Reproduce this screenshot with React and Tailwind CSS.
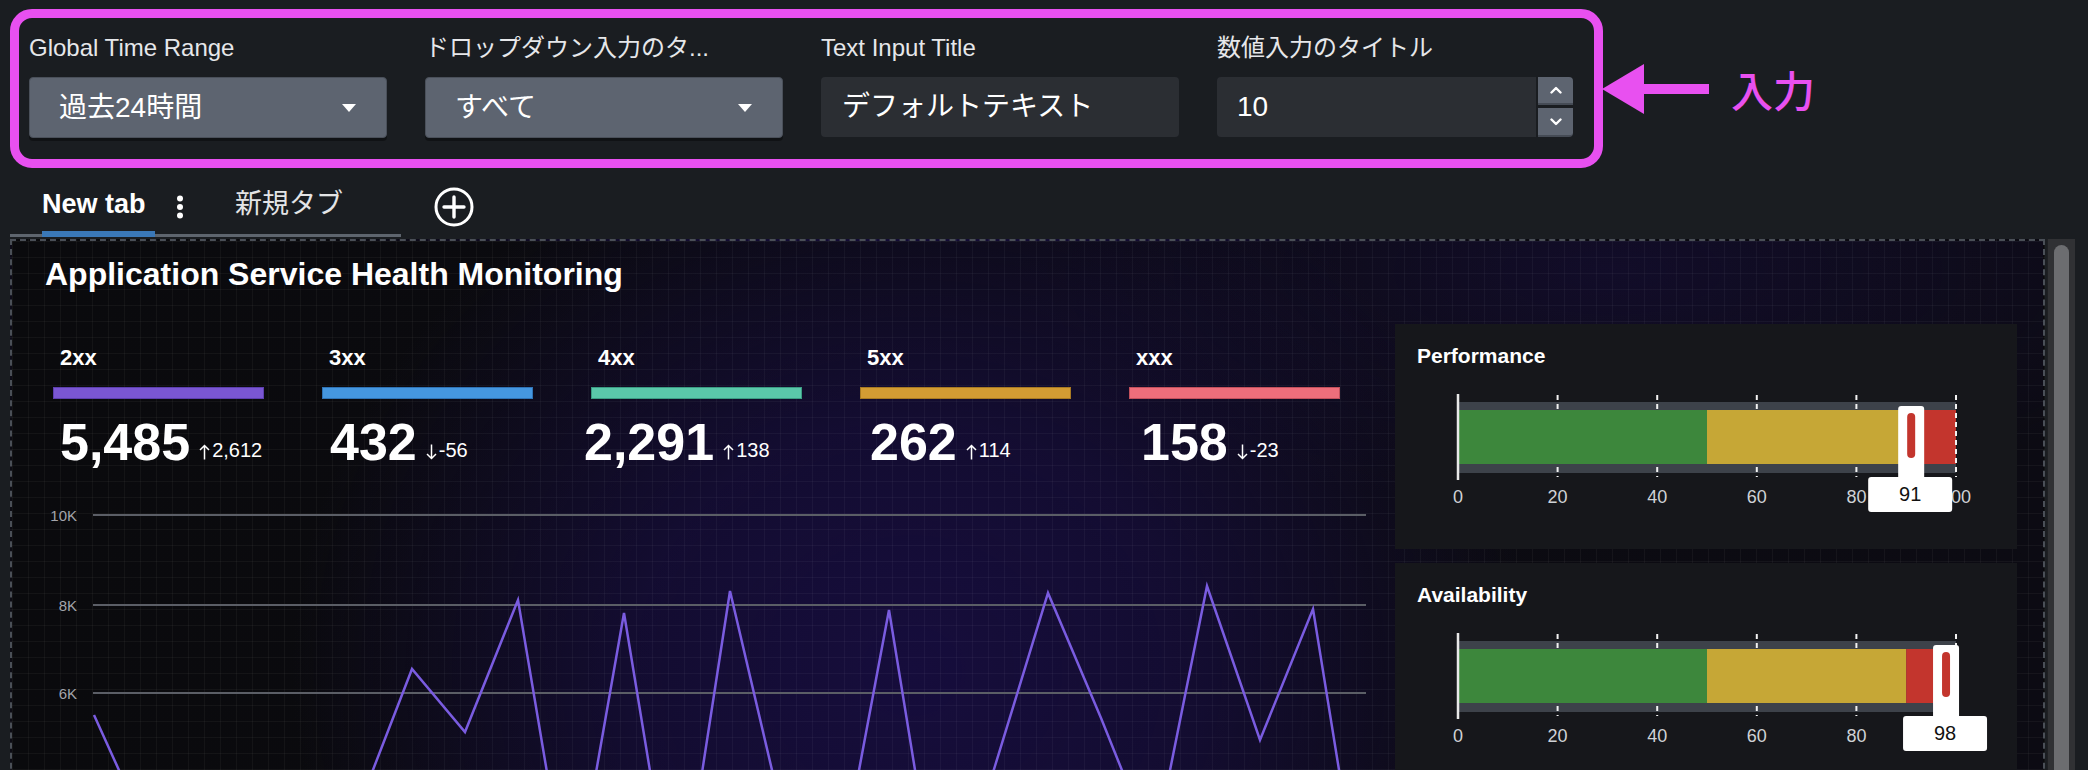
import React from 'react';

const kpis = [
  { label: '2xx', bar: 'bg-[#7a56d3] border-[#5d3fae]', value: '5,485', up: true, delta: '2,612', off: 'ml-[7px]' },
  { label: '3xx', bar: 'bg-[#4597e0] border-[#2f73b5]', value: '432', up: false, delta: '-56', off: 'ml-[8px]' },
  { label: '4xx', bar: 'bg-[#5ac8aa] border-[#3b9c83]', value: '2,291', up: true, delta: '138', off: '-ml-[7px]' },
  { label: '5xx', bar: 'bg-[#d39c33] border-[#a87a22]', value: '262', up: true, delta: '114', off: 'ml-[10px]' },
  { label: 'xxx', bar: 'bg-[#ee6e7b] border-[#c2505c]', value: '158', up: false, delta: '-23', off: 'ml-[12px]' },
];

// chart values, already in screen px (y of each point)
const series = [715, 832, 900, 880, 920, 806, 669, 732, 600, 915, 613, 935, 591, 817, 893, 610, 936, 766, 593, 718, 850, 586, 740, 609, 937];

function Caret() {
  return (
    <svg width="14" height="8" viewBox="0 0 14 8">
      <path d="M0 0 L14 0 L7 8 Z" fill="#ffffff" />
    </svg>
  );
}

function Field({ label, children }) {
  return (
    <div className="w-[358px] flex flex-col">
      <div className="text-[24px] leading-[30px] text-[#e6e7ea] mb-[14px] whitespace-nowrap">{label}</div>
      {children}
    </div>
  );
}

function Dropdown({ value }) {
  return (
    <button className="w-[358px] h-[61px] rounded-[4px] bg-[#5d6470] border border-[#4a505a] shadow-[0_3px_0_rgba(0,0,0,0.35)] flex items-center justify-between pl-[29px] pr-[30px] text-[28px] text-white">
      <span>{value}</span>
      <Caret />
    </button>
  );
}

function Chevron({ up }) {
  return (
    <svg width="12" height="8" viewBox="0 0 12 8">
      <path d={up ? 'M1.5 6.5 L6 2 L10.5 6.5' : 'M1.5 1.5 L6 6 L10.5 1.5'} stroke="#ffffff" strokeWidth="2.4" fill="none" strokeLinecap="round" strokeLinejoin="round" />
    </svg>
  );
}

function TrendArrow({ up }) {
  return (
    <svg width="11" height="16" viewBox="0 0 11 16" className="mr-[2px]">
      {up ? (
        <path d="M5.5 15.5 V1.5 M1 6 L5.5 1.5 L10 6" stroke="#ffffff" strokeWidth="1.5" fill="none" />
      ) : (
        <path d="M5.5 0.5 V14.5 M1 10 L5.5 14.5 L10 10" stroke="#ffffff" strokeWidth="1.5" fill="none" />
      )}
    </svg>
  );
}

function Gauge({ title, value }) {
  const x0 = 63;
  const w = 498;
  const px = (v) => x0 + (w * v) / 100;
  const cx = px(value);
  const ticks = [20, 40, 60, 80, 100];
  return (
    <div className="w-[622px] h-[225px] bg-[#16171b] flex flex-col shrink-0">
      <div className="pl-[22px] pt-[18px] text-[21px] leading-[28px] font-bold text-white">{title}</div>
      <svg width="622" height="169" viewBox="0 0 622 169" className="mt-[10px] block">
        <rect x={x0} y="22" width={w} height="71" fill="#3d424a" />
        {ticks.map((t) => (
          <line key={t} x1={px(t)} x2={px(t)} y1="15" y2="97" stroke="#f2f2f2" strokeWidth="2" strokeDasharray="5 4" />
        ))}
        <rect x={x0} y="30" width={px(50) - x0} height="54" fill="#3d873c" />
        <rect x={px(50)} y="30" width={px(90) - px(50)} height="54" fill="#c6a736" />
        <rect x={px(90)} y="30" width={px(100) - px(90)} height="54" fill="#c3352d" />
        <line x1={px(100)} x2={px(100)} y1="15" y2="97" stroke="#f2f2f2" strokeWidth="2" strokeDasharray="5 4" />
        <line x1={x0} x2={x0} y1="14" y2="100" stroke="#e8e8e8" strokeWidth="2.5" />
        {[0, 20, 40, 60, 80, 100].map((t) => (
          <text key={t} x={px(t)} y="118" textAnchor="middle" dominantBaseline="middle" fontSize="18" fill="#cfd2d6" fontFamily="Liberation Sans, sans-serif">
            {t}
          </text>
        ))}
        <rect x={cx - 13} y="26" width="26" height="76" rx="3" fill="#ffffff" />
        <rect x={cx - 43} y="97" width="84" height="35" rx="3" fill="#ffffff" />
        <rect x={cx - 4} y="33" width="8" height="45" rx="4" fill="#c3352d" />
        <text x={cx - 1} y="116" textAnchor="middle" dominantBaseline="middle" fontSize="20" fill="#111111" fontFamily="Liberation Sans, sans-serif">
          {value}
        </text>
      </svg>
    </div>
  );
}

function Chart() {
  const points = series.map((y, i) => `${82 + 53 * i},${y - 490}`).join(' ');
  const grid = [
    { y: 25, label: '10K' },
    { y: 115, label: '8K' },
    { y: 203, label: '6K' },
  ];
  return (
    <svg width="1383" height="420" viewBox="0 0 1383 420" className="block mt-[20px]">
      {grid.map((g) => (
        <g key={g.label}>
          <line x1="81" x2="1354" y1={g.y} y2={g.y} stroke="#5b5e66" strokeWidth="2" />
          <text x="65" y={g.y + 2} textAnchor="end" dominantBaseline="middle" fontSize="15" fill="#a3a4ab" fontFamily="Liberation Sans, sans-serif">
            {g.label}
          </text>
        </g>
      ))}
      <polyline points={points} fill="none" stroke="#7a5ce0" strokeWidth="2.5" strokeLinejoin="miter" />
    </svg>
  );
}

export default function App() {
  return (
    <div className="w-[2088px] h-[770px] overflow-hidden bg-[#1a1d21] font-['Liberation_Sans','Noto_Sans_CJK_JP',sans-serif] text-white">
      {/* INPUTS */}
      <div className="h-[168px] flex items-start">
        <div className="ml-[10px] mt-[9px] w-[1593px] h-[159px] border-[9px] border-[#e850f0] rounded-[22px] flex gap-[38px] pl-[10px] pt-[15px]">
          <Field label="Global Time Range">
            <Dropdown value="過去24時間" />
          </Field>
          <Field label="ドロップダウン入力のタ...">
            <Dropdown value="すべて" />
          </Field>
          <Field label="Text Input Title">
            <div className="w-[358px] h-[60px] rounded-[4px] bg-[#2b2e33] flex items-center pl-[21px] text-[28px]">デフォルトテキスト</div>
          </Field>
          <Field label="数値入力のタイトル">
            <div className="w-[356px] h-[60px] flex gap-[2px]">
              <div className="flex-1 rounded-l-[4px] bg-[#2b2e33] flex items-center pl-[20px] text-[28px]">10</div>
              <div className="w-[35px] flex flex-col gap-[3px]">
                <div className="h-[28px] rounded-tr-[4px] bg-[#5d6470] border-b-2 border-[#454b55] flex items-center justify-center">
                  <Chevron up />
                </div>
                <div className="h-[29px] rounded-br-[4px] bg-[#5d6470] border-b-2 border-[#454b55] flex items-center justify-center">
                  <Chevron />
                </div>
              </div>
            </div>
          </Field>
        </div>

        {/* annotation */}
        <div className="flex items-center mt-[64px] h-[50px] -ml-[1px]">
          <svg width="107" height="50" viewBox="0 0 107 50">
            <path d="M0 25 L42 0 L42 50 Z" fill="#e850f0" />
            <rect x="41" y="20" width="66" height="10" fill="#e850f0" />
          </svg>
          <span className="ml-[22px] text-[42px] leading-[50px] font-medium text-[#e850f0] font-['Noto_Sans_CJK_JP',sans-serif]">入力</span>
        </div>
      </div>

      {/* TABS */}
      <div className="h-[71px] flex items-start pl-[10px]">
        <div className="w-[391px] h-[69px] border-b-[3px] border-[#5e656e] flex items-stretch pl-[32px]">
          <div className="w-[113px] -mb-[3px] border-b-[6px] border-[#3a78b8] flex items-center pt-[9px] text-[27px] font-bold text-white whitespace-nowrap">
            New tab
          </div>
          <div className="ml-[21px] flex items-center pt-[11px]">
            <svg width="8" height="24" viewBox="0 0 8 24">
              <circle cx="4" cy="3.5" r="3" fill="#ffffff" />
              <circle cx="4" cy="12" r="3" fill="#ffffff" />
              <circle cx="4" cy="20.5" r="3" fill="#ffffff" />
            </svg>
          </div>
          <div className="ml-[51px] flex items-center pt-[7px] text-[27px] text-[#e3e4e6] whitespace-nowrap">新規タブ</div>
        </div>
        <svg width="40" height="40" viewBox="0 0 40 40" className="ml-[33px] mt-[19px]">
          <circle cx="20" cy="20" r="18" fill="none" stroke="#ffffff" strokeWidth="3" />
          <path d="M20 10 V30 M10 20 H30" stroke="#ffffff" strokeWidth="3.4" strokeLinecap="round" />
        </svg>
      </div>

      {/* DASHBOARD CANVAS */}
      <div className="flex items-start">
        <div className="ml-[10px] w-[2035px] h-[560px] border-2 border-dashed border-[#4a4f57] [background-image:linear-gradient(rgba(255,255,255,0.04)_1px,transparent_1px),linear-gradient(90deg,rgba(255,255,255,0.04)_1px,transparent_1px),radial-gradient(ellipse_620px_560px_at_900px_430px,#160d3c_0%,rgba(22,13,60,0.75)_45%,transparent_100%),radial-gradient(ellipse_600px_240px_at_1600px_30px,rgba(24,14,64,0.5),transparent_100%),linear-gradient(90deg,#0a0a0d,#0c0b13)] [background-size:16px_16px,16px_16px,100%_100%,100%_100%,100%_100%] pt-[13px]">
          <div className="pl-[33px] text-[32px] leading-[40px] font-bold text-white whitespace-nowrap">Application Service Health Monitoring</div>

          <div className="mt-[30px] flex">
            {/* LEFT */}
            <div className="w-[1383px] shrink-0 flex flex-col pt-[21px]">
              <div className="flex gap-[58px] pl-[41px]">
                {kpis.map((k) => (
                  <div key={k.label} className="w-[211px] flex flex-col">
                    <div className="pl-[7px] text-[22px] leading-[26px] font-bold text-white">{k.label}</div>
                    <div className={`mt-[16px] h-[12px] border ${k.bar}`} />
                    <div className={`mt-[15px] flex items-baseline whitespace-nowrap ${k.off}`}>
                      <span className="text-[52px] leading-[56px] font-bold text-white">{k.value}</span>
                      <span className="ml-[9px] flex items-end text-[20px] leading-[20px] text-white">
                        <TrendArrow up={k.up} />
                        {k.delta}
                      </span>
                    </div>
                  </div>
                ))}
              </div>
              <Chart />
            </div>

            {/* RIGHT */}
            <div className="flex flex-col gap-[14px]">
              <Gauge title="Performance" value={91} />
              <Gauge title="Availability" value={98} />
            </div>
          </div>
        </div>

        {/* scrollbar */}
        <div className="ml-[2px] w-[28px] h-[560px] bg-[#303134] border-l border-[#1f2023] flex justify-center">
          <div className="mt-[6px] w-[15px] h-[540px] rounded-full bg-[#6c6d70]" />
        </div>
      </div>
    </div>
  );
}
